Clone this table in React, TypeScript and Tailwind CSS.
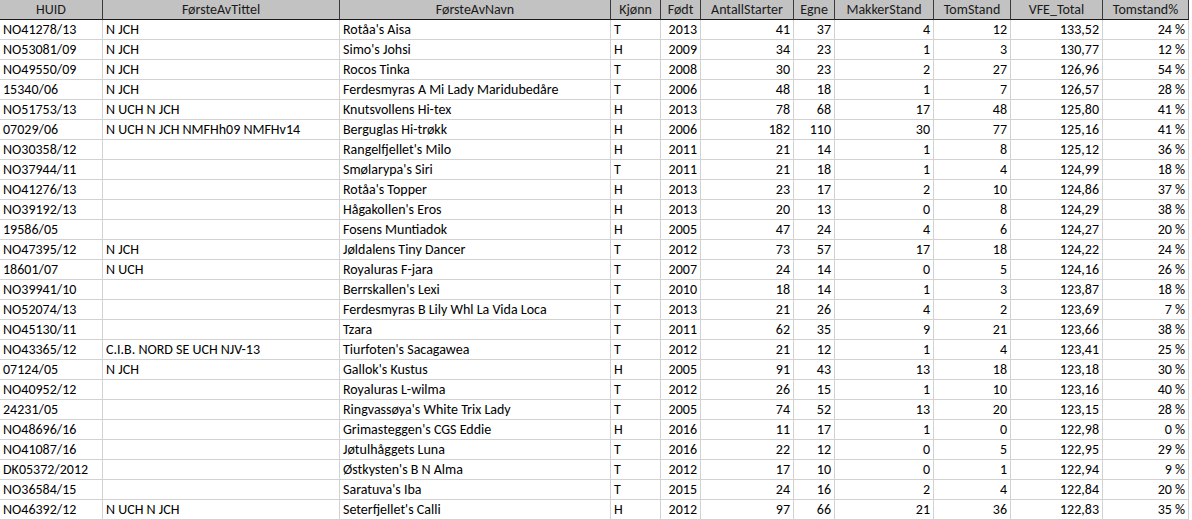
import React from "react";

type Row = [string, string, string, string, string, string, string, string, string, string, string];

const rows: Row[] = [
  ["NO41278/13", "N JCH", "Rotåa's Aisa", "T", "2013", "41", "37", "4", "12", "133,52", "24 %"],
  ["NO53081/09", "N JCH", "Simo's Johsi", "H", "2009", "34", "23", "1", "3", "130,77", "12 %"],
  ["NO49550/09", "N JCH", "Rocos Tinka", "T", "2008", "30", "23", "2", "27", "126,96", "54 %"],
  ["15340/06", "N JCH", "Ferdesmyras A Mi Lady Maridubedåre", "T", "2006", "48", "18", "1", "7", "126,57", "28 %"],
  ["NO51753/13", "N UCH N JCH", "Knutsvollens Hi-tex", "H", "2013", "78", "68", "17", "48", "125,80", "41 %"],
  ["07029/06", "N UCH N JCH NMFHh09 NMFHv14", "Berguglas Hi-trøkk", "H", "2006", "182", "110", "30", "77", "125,16", "41 %"],
  ["NO30358/12", "", "Rangelfjellet's Milo", "H", "2011", "21", "14", "1", "8", "125,12", "36 %"],
  ["NO37944/11", "", "Smølarypa's Siri", "T", "2011", "21", "18", "1", "4", "124,99", "18 %"],
  ["NO41276/13", "", "Rotåa's Topper", "H", "2013", "23", "17", "2", "10", "124,86", "37 %"],
  ["NO39192/13", "", "Hågakollen's Eros", "H", "2013", "20", "13", "0", "8", "124,29", "38 %"],
  ["19586/05", "", "Fosens Muntiadok", "H", "2005", "47", "24", "4", "6", "124,27", "20 %"],
  ["NO47395/12", "N JCH", "Jøldalens Tiny Dancer", "T", "2012", "73", "57", "17", "18", "124,22", "24 %"],
  ["18601/07", "N UCH", "Royaluras F-jara", "T", "2007", "24", "14", "0", "5", "124,16", "26 %"],
  ["NO39941/10", "", "Berrskallen's Lexi", "T", "2010", "18", "14", "1", "3", "123,87", "18 %"],
  ["NO52074/13", "", "Ferdesmyras B Lily Whl La Vida Loca", "T", "2013", "21", "26", "4", "2", "123,69", "7 %"],
  ["NO45130/11", "", "Tzara", "T", "2011", "62", "35", "9", "21", "123,66", "38 %"],
  ["NO43365/12", "C.I.B. NORD SE UCH NJV-13", "Tiurfoten's Sacagawea", "T", "2012", "21", "12", "1", "4", "123,41", "25 %"],
  ["07124/05", "N JCH", "Gallok's Kustus", "H", "2005", "91", "43", "13", "18", "123,18", "30 %"],
  ["NO40952/12", "", "Royaluras L-wilma", "T", "2012", "26", "15", "1", "10", "123,16", "40 %"],
  ["24231/05", "", "Ringvassøya's White Trix Lady", "T", "2005", "74", "52", "13", "20", "123,15", "28 %"],
  ["NO48696/16", "", "Grimasteggen's CGS Eddie", "H", "2016", "11", "17", "1", "0", "122,98", "0 %"],
  ["NO41087/16", "", "Jøtulhåggets Luna", "T", "2016", "22", "12", "0", "5", "122,95", "29 %"],
  ["DK05372/2012", "", "Østkysten's B N Alma", "T", "2012", "17", "10", "0", "1", "122,94", "9 %"],
  ["NO36584/15", "", "Saratuva's Iba", "T", "2015", "24", "16", "2", "4", "122,84", "20 %"],
  ["NO46392/12", "N UCH N JCH", "Seterfjellet's Calli", "H", "2012", "97", "66", "21", "36", "122,83", "35 %"],
];

const headers = [
  "HUID",
  "FørsteAvTittel",
  "FørsteAvNavn",
  "Kjønn",
  "Født",
  "AntallStarter",
  "Egne",
  "MakkerStand",
  "TomStand",
  "VFE_Total",
  "Tomstand%",
];

const leftAligned = [true, true, true, true, false, false, false, false, false, false, false];

export default function App() {
  return (
    <div
      className="w-[1192px] h-[520px] overflow-hidden bg-white text-[14px] text-black"
      style={{ fontFamily: "Carlito, Lato, 'Open Sans', sans-serif" }}
    >
      <div className="grid grid-cols-[103px_237px_271px_50px_40px_93px_41px_99px_77px_92px_86px] w-[1189px]">
        {headers.map((h) => (
          <div
            key={h}
            className="h-[20px] bg-[#c2c2c2] border-r border-b border-r-[#3a3a3a] border-b-[#1a1a1a] flex items-center justify-center leading-none text-[#1a1a1a] whitespace-nowrap"
          >
            {h}
          </div>
        ))}
        {rows.map((r, ri) =>
          r.map((c, ci) => (
            <div
              key={ri + "-" + ci}
              className={
                "h-[20px] border-r border-b border-[#d2d2d2] flex items-center leading-none whitespace-nowrap overflow-hidden " +
                (leftAligned[ci] ? "justify-start pl-[3px]" : "justify-end pr-[3px]")
              }
            >
              {c}
            </div>
          ))
        )}
      </div>
    </div>
  );
}
